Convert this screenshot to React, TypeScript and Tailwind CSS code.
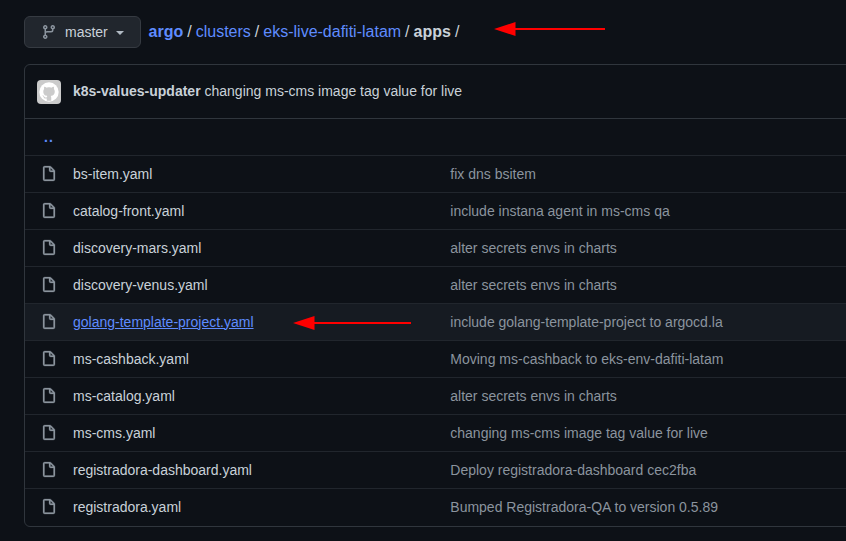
import React from "react";

const files = [
  { name: "bs-item.yaml", message: "fix dns bsitem" },
  { name: "catalog-front.yaml", message: "include instana agent in ms-cms qa" },
  { name: "discovery-mars.yaml", message: "alter secrets envs in charts" },
  { name: "discovery-venus.yaml", message: "alter secrets envs in charts" },
  { name: "golang-template-project.yaml", message: "include golang-template-project to argocd.la", active: true },
  { name: "ms-cashback.yaml", message: "Moving ms-cashback to eks-env-dafiti-latam" },
  { name: "ms-catalog.yaml", message: "alter secrets envs in charts" },
  { name: "ms-cms.yaml", message: "changing ms-cms image tag value for live" },
  { name: "registradora-dashboard.yaml", message: "Deploy registradora-dashboard cec2fba" },
  { name: "registradora.yaml", message: "Bumped Registradora-QA to version 0.5.89" },
];

function BranchIcon() {
  return (
    <svg width="16" height="16" viewBox="0 0 16 16" className="shrink-0 fill-[#8b949e]">
      <path d="M9.5 3.25a2.25 2.25 0 1 1 3 2.122V6A2.5 2.5 0 0 1 10 8.5H6a1 1 0 0 0-1 1v1.128a2.251 2.251 0 1 1-1.5 0V5.372a2.25 2.25 0 1 1 1.5 0v1.836A2.493 2.493 0 0 1 6 7h4a1 1 0 0 0 1-1v-.628A2.25 2.25 0 0 1 9.5 3.25Zm-6 0a.75.75 0 1 0 1.5 0 .75.75 0 0 0-1.5 0Zm8.25-.75a.75.75 0 1 0 0 1.5.75.75 0 0 0 0-1.5ZM4.25 12a.75.75 0 1 0 0 1.5.75.75 0 0 0 0-1.5Z" />
    </svg>
  );
}

function FileIcon() {
  return (
    <svg
      width="16"
      height="16"
      viewBox="0 0 16 16"
      className="mr-4 shrink-0 overflow-visible fill-[#8b949e] stroke-[#8b949e] stroke-[0.25]"
    >
      <path
        fillRule="evenodd"
        d="M3.75 1.5a.25.25 0 00-.25.25v11.5c0 .138.112.25.25.25h8.5a.25.25 0 00.25-.25V6H9.75A1.75 1.75 0 018 4.25V1.5H3.75zm5.75.56v2.19c0 .138.112.25.25.25h2.19L9.5 2.06zM2 1.75C2 .784 2.784 0 3.75 0h5.086c.464 0 .909.184 1.237.513l3.414 3.414c.329.328.513.773.513 1.237v8.086A1.75 1.75 0 0112.25 15h-8.5A1.75 1.75 0 012 13.25V1.75z"
      />
    </svg>
  );
}

function Avatar() {
  return (
    <div className="mt-px flex h-6 w-6 shrink-0 items-center justify-center rounded-[4px] bg-[#cbcbcb]">
      <svg width="20" height="20" viewBox="0 0 20 20">
        <circle cx="10" cy="10" r="9.7" fill="#fff" />
        <g transform="translate(1 1) scale(1.125)" fill="#cbcbcb">
          <path d="M6.01 15.8v-2.08c-2.01.37-2.53-.49-2.69-.94-.09-.23-.48-.94-.82-1.13-.28-.15-.68-.52-.01-.53.63-.01 1.08.58 1.23.82.72 1.21 1.87.87 2.33.66.07-.52.28-.87.51-1.07-1.78-.2-3.64-.89-3.64-3.95 0-.87.31-1.59.82-2.15-.08-.2-.36-1.02.08-2.12 0 0 .67-.21 2.2.82.64-.18 1.32-.27 2-.27s1.36.09 2 .27c1.53-1.04 2.2-.82 2.2-.82.44 1.1.16 1.92.08 2.12.51.56.82 1.27.82 2.15 0 3.07-1.87 3.75-3.65 3.95.29.25.54.73.54 1.48v2.79z" />
        </g>
      </svg>
    </div>
  );
}

function Arrow({ length }: { length: number }) {
  return (
    <svg width={length} height="14" viewBox={`0 0 ${length} 14`} className="block fill-[#ff0000]">
      <path d={`M0 7 L21.5 0 V6 H${length} V8 H21.5 V14 Z`} />
    </svg>
  );
}

export default function App() {
  return (
    <div className="relative h-[541px] w-[846px] overflow-hidden bg-[#0d1117] font-['Liberation_Sans',Arial,sans-serif] text-[14px] leading-[21px] text-[#c9d1d9]">
      <header className="flex items-center pt-4 pl-6">
        <button className="flex h-8 w-[117px] items-center rounded-md border border-[#363b42] bg-[#21262d] pl-4">
          <BranchIcon />
          <span className="ml-2">master</span>
          <span className="mt-[2px] ml-2 h-0 w-0 border-x-4 border-t-4 border-x-transparent border-t-[#b1bac4]" />
        </button>
        <nav className="ml-[7.6px] flex gap-1 text-[16px] leading-6 whitespace-pre">
          <a className="font-bold text-[#5f8cff]">argo</a>
          <span>/</span>
          <a className="text-[#5f8cff]">clusters</a>
          <span>/</span>
          <a className="text-[#5f8cff]">eks-live-dafiti-latam</a>
          <span>/</span>
          <span className="font-bold">apps</span>
          <span>/</span>
        </nav>
      </header>

      <main className="mt-4 ml-6 w-[900px] rounded-md border border-[#30363d] pb-px">
        <div className="flex h-[54px] items-center border-b border-[#30363d] pl-3">
          <Avatar />
          <p className="ml-3">
            <span className="font-bold">k8s-values-updater</span> changing ms-cms image tag value for live
          </p>
        </div>
        <div className="flex h-9 items-center pl-[19px] font-bold text-[#5f8cff]">
          <span className="tracking-[1px]">..</span>
        </div>
        {files.map((file) => (
          <div
            key={file.name}
            className={
              file.active
                ? "flex h-[37px] items-center border-t border-[#21262d] bg-[#161b22] pl-4"
                : "flex h-[37px] items-center border-t border-[#21262d] pl-4"
            }
          >
            <FileIcon />
            <span className={file.active ? "w-[377.3px] text-[#5f8cff] underline" : "w-[377.3px]"}>{file.name}</span>
            <span className="text-[#8b949e]">{file.message}</span>
          </div>
        ))}
      </main>

      <div className="absolute top-[22px] left-[494px]">
        <Arrow length={111} />
      </div>
      <div className="absolute top-[316px] left-[293px]">
        <Arrow length={118} />
      </div>
    </div>
  );
}
